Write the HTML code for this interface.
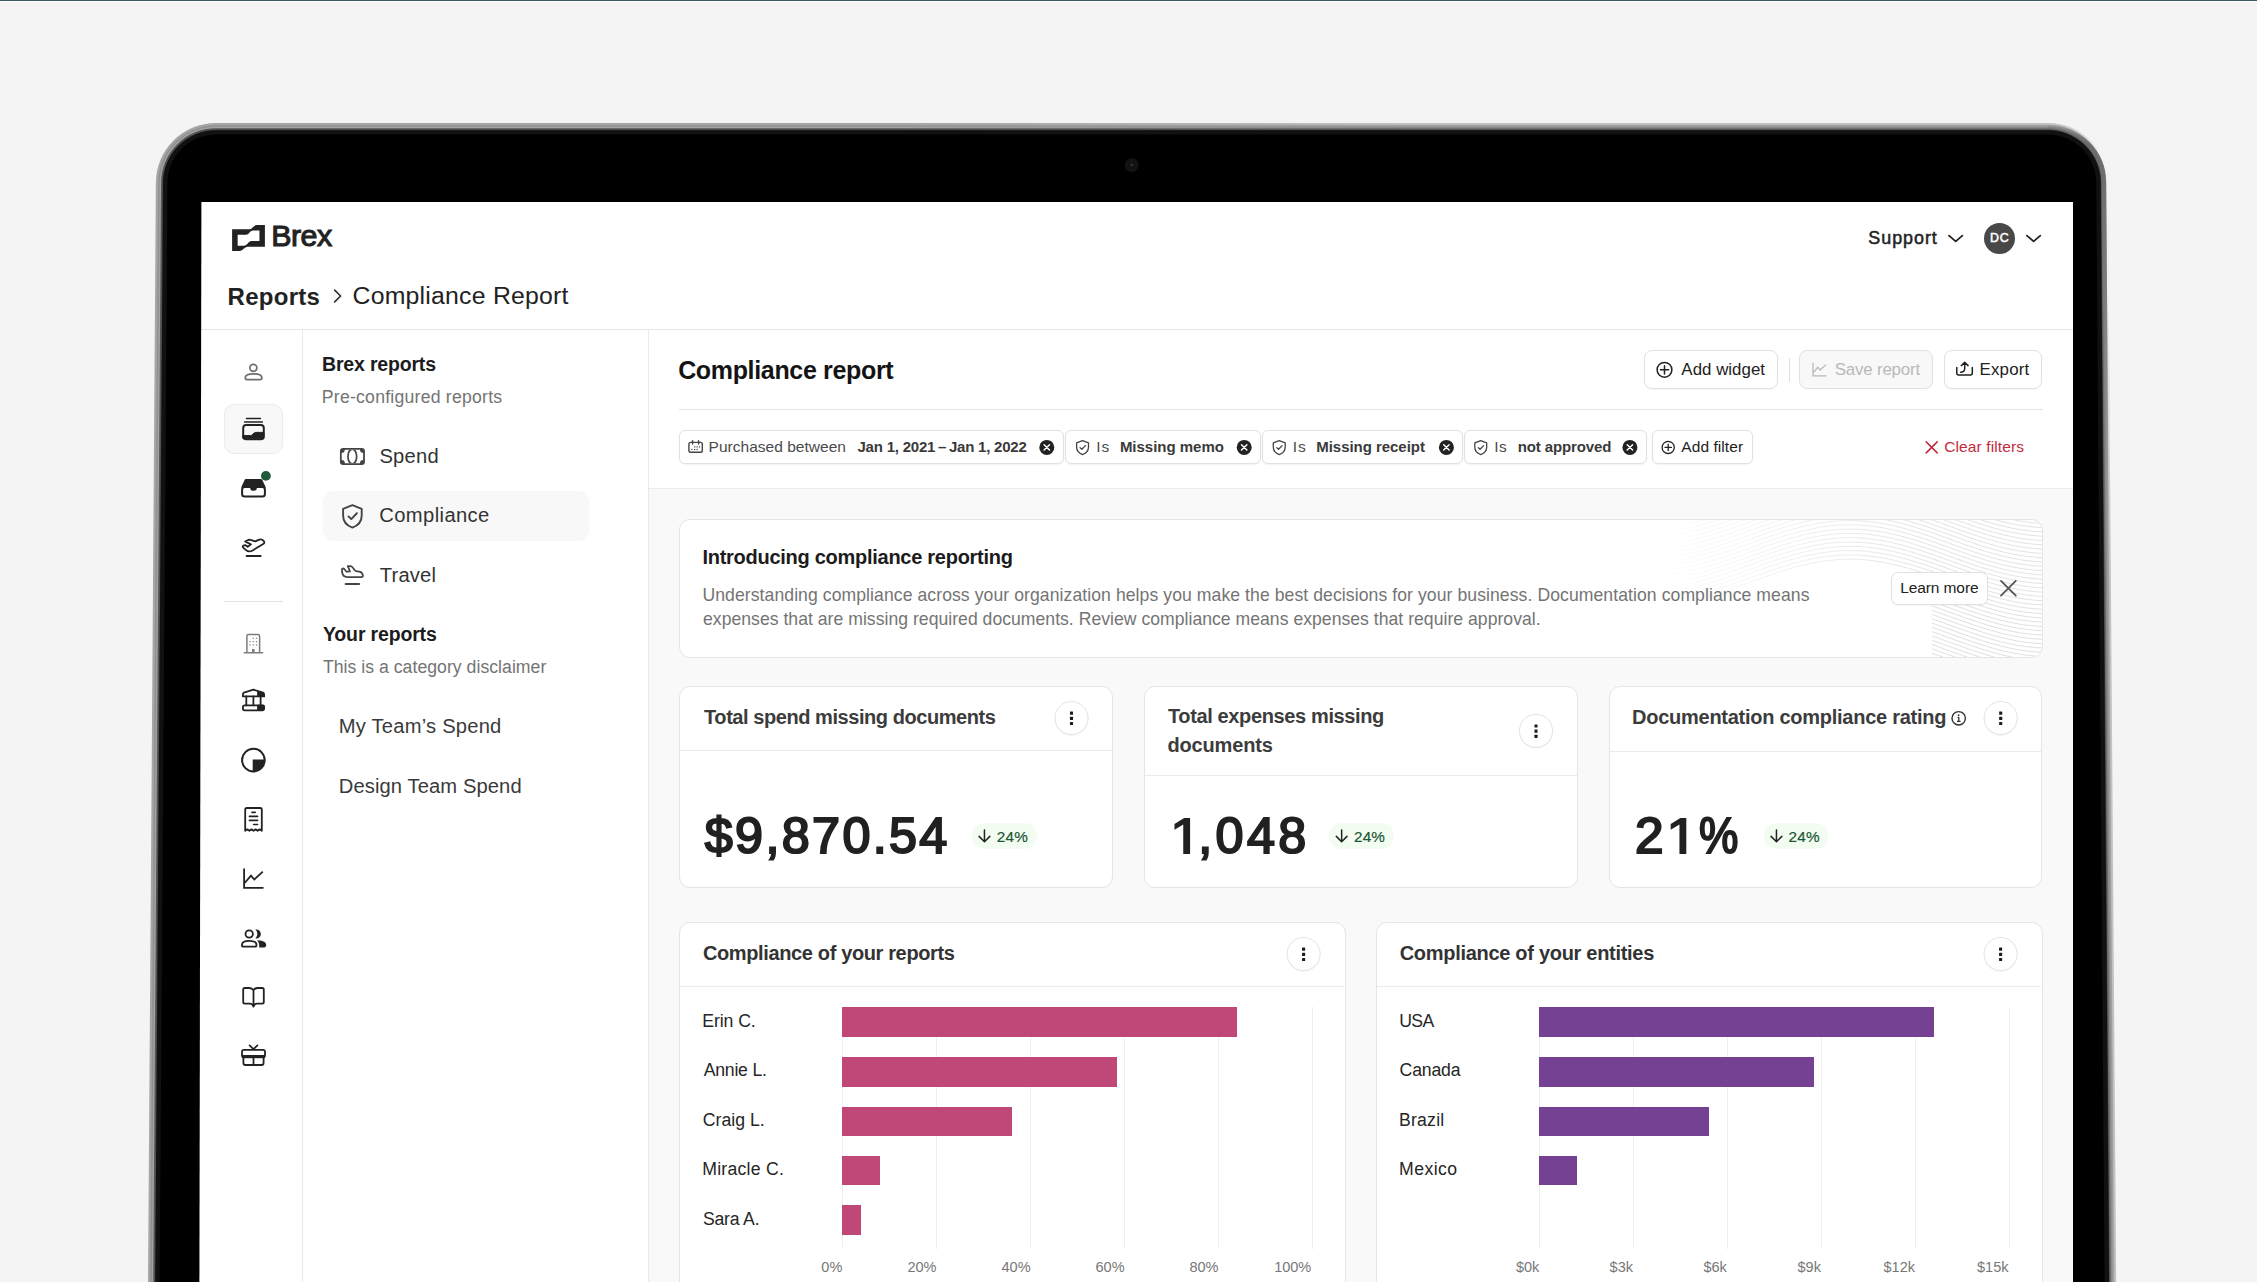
<!DOCTYPE html>
<html><head><meta charset="utf-8"><title>Brex Compliance report</title>
<style>
html,body{margin:0;padding:0}
body{width:2257px;height:1282px;background:#f4f4f4;overflow:hidden;position:relative;font-family:'Liberation Sans',sans-serif}
#topline{position:absolute;left:0;top:0;width:2257px;height:2px;background:linear-gradient(#3d5863,#3d5863 1px,#fbfbfb 1px,#fbfbfb 2px)}
#laptop{position:absolute;left:0;top:0}
#screen{position:absolute;left:199px;top:202px;width:1874px;height:1080px;background:#fff;overflow:hidden}
#pg{position:absolute;left:-199px;top:-202px;width:2257px;height:1282px}
#edge{position:absolute;left:0;top:0;pointer-events:none}
.t{position:absolute;white-space:pre;font-family:'Liberation Sans',sans-serif}
.b{position:absolute;box-sizing:border-box}
.hl{position:absolute;height:1px;background:#e7e7e7}
.vl{position:absolute;width:1px;background:#e9e9e9}
.chip{position:absolute;box-sizing:border-box;border:1px solid #e1e1e1;border-radius:6px;background:#fff;box-shadow:0 1px 1.5px rgba(0,0,0,.05)}
.btn{position:absolute;box-sizing:border-box;border:1px solid #e1e1e1;border-radius:8px;background:#fff;box-shadow:0 1px 1.5px rgba(0,0,0,.04)}
.card{position:absolute;box-sizing:border-box;border:1px solid #e5e5e5;border-radius:11px;background:#fff}
.menu{position:absolute;box-sizing:border-box;width:33.5px;height:33.5px;border:1px solid #e3e3e3;border-radius:50%;background:#fff;box-shadow:0 1px 2px rgba(0,0,0,.05)}
.badge{position:absolute;box-sizing:border-box;height:25.5px;border-radius:13px;background:#f2fcf0}
.bar{position:absolute;height:29.5px}
.pk{background:#c04878}
.pu{background:#754293}
.gl{position:absolute;width:1px;background:#eeeeee;top:1007px;height:242px}
svg{position:absolute;overflow:visible}
</style></head>
<body>
<div id="topline"></div>
<svg id="laptop" width="2257" height="1282" viewBox="0 0 2257 1282">
<defs>
<linearGradient id="bg0" gradientUnits="userSpaceOnUse" x1="900" x2="1400" y1="0" y2="0"><stop offset="0" stop-color="#a6a6a6"/><stop offset="1" stop-color="#c2c2c2"/></linearGradient>
<linearGradient id="bg1" gradientUnits="userSpaceOnUse" x1="900" x2="1400" y1="0" y2="0"><stop offset="0" stop-color="#a0a0a0"/><stop offset="1" stop-color="#aaaaaa"/></linearGradient>
<linearGradient id="bg2" gradientUnits="userSpaceOnUse" x1="900" x2="1400" y1="0" y2="0"><stop offset="0" stop-color="#909090"/><stop offset="1" stop-color="#9c9c9c"/></linearGradient>
<linearGradient id="bg3" gradientUnits="userSpaceOnUse" x1="900" x2="1400" y1="0" y2="0"><stop offset="0" stop-color="#a2a2a2"/><stop offset="1" stop-color="#8a8a8a"/></linearGradient>
<linearGradient id="bg4" gradientUnits="userSpaceOnUse" x1="900" x2="1400" y1="0" y2="0"><stop offset="0" stop-color="#555555"/><stop offset="1" stop-color="#6a6a6a"/></linearGradient>
<linearGradient id="bg5" gradientUnits="userSpaceOnUse" x1="900" x2="1400" y1="0" y2="0"><stop offset="0" stop-color="#444"/><stop offset="1" stop-color="#3a3a3a"/></linearGradient>
<linearGradient id="fade" gradientUnits="userSpaceOnUse" x1="0" x2="0" y1="123" y2="560"><stop offset="0" stop-color="#5c5c5c" stop-opacity="0"/><stop offset="0.05" stop-color="#666" stop-opacity="0.9"/><stop offset="0.35" stop-color="#777" stop-opacity="0.9"/><stop offset="1" stop-color="#888" stop-opacity="0"/></linearGradient>
<linearGradient id="fade0" gradientUnits="userSpaceOnUse" x1="0" x2="0" y1="123" y2="560"><stop offset="0" stop-color="#f4f4f4" stop-opacity="0"/><stop offset="0.07" stop-color="#f4f4f4" stop-opacity="1"/><stop offset="0.35" stop-color="#f4f4f4" stop-opacity="1"/><stop offset="1" stop-color="#f4f4f4" stop-opacity="0"/></linearGradient>
</defs>
<path d="M147.91,1295 L155.85,183 A60.00,60.00 0 0 1 215.85,123.00 L2047.90,123.00 A60.00,60.00 0 0 1 2107.90,183 L2116.30,1295 Z" fill="url(#bg0)"/>
<path d="M149.71,1295 L157.65,183 A58.20,58.20 0 0 1 215.85,124.80 L2047.90,124.80 A58.20,58.20 0 0 1 2106.10,183 L2114.50,1295 Z" fill="url(#bg1)"/>
<path d="M150.31,1295 L158.25,183 A57.60,57.60 0 0 1 215.85,125.40 L2047.90,125.40 A57.60,57.60 0 0 1 2105.50,183 L2113.90,1295 Z" fill="url(#bg2)"/>
<path d="M151.71,1295 L159.65,183 A56.20,56.20 0 0 1 215.85,126.80 L2047.90,126.80 A56.20,56.20 0 0 1 2104.10,183 L2112.50,1295 Z" fill="url(#bg3)"/>
<path d="M153.11,1295 L161.05,183 A54.80,54.80 0 0 1 215.85,128.20 L2047.90,128.20 A54.80,54.80 0 0 1 2102.70,183 L2111.10,1295 Z" fill="url(#bg4)"/>
<path d="M154.51,1295 L162.45,183 A53.40,53.40 0 0 1 215.85,129.60 L2047.90,129.60 A53.40,53.40 0 0 1 2101.30,183 L2109.70,1295 Z" fill="url(#bg5)"/>
<path d="M155.11,1295 L163.05,183 A52.80,52.80 0 0 1 215.85,130.20 L2047.90,130.20 A52.80,52.80 0 0 1 2100.70,183 L2109.10,1295 Z" fill="#111"/>
<path d="M159.51,1295 L167.45,183 A48.40,48.40 0 0 1 215.85,134.60 L2047.90,134.60 A48.40,48.40 0 0 1 2096.30,183 L2104.70,1295 Z" fill="#000"/>
<path d="M2047.90,123.75 A59.25,59.25 0 0 1 2107.15,183 L2115.55,1295" fill="none" stroke="url(#fade0)" stroke-width="1.9"/>
<path d="M2047.90,126.60 A56.40,56.40 0 0 1 2104.30,183 L2112.70,1295" fill="none" stroke="url(#fade)" stroke-width="3.8"/>
<circle cx="1131.7" cy="165" r="7" fill="#121212"/><circle cx="1131.7" cy="165" r="1.2" fill="#274036"/>
</svg>
<div id="screen"><div id="pg">
<div class="b" style="left:649px;top:488px;width:1424px;height:800px;background:#f9f9f9;border-top:1px solid #ececec"></div>
<div class="hl" style="left:201px;top:329px;width:1872px"></div>
<div class="vl" style="left:302px;top:330px;height:960px"></div>
<div class="vl" style="left:648px;top:330px;height:960px"></div>
<div class="b" style="left:223.9px;top:404.1px;width:58.8px;height:49.6px;background:#f8f8f8;border:1px solid #ebebeb;border-radius:10px"></div>
<div class="hl" style="left:224px;top:601px;width:59px;background:#e2e2e2"></div>
<div class="b" style="left:322.8px;top:491.1px;width:266.7px;height:49.8px;background:#f8f8f8;border-radius:11px"></div>
<div class="hl" style="left:679px;top:409px;width:1363.5px;background:#e6e6e6"></div>
<div class="btn" style="left:1644.2px;top:350.2px;width:134.2px;height:38.6px;"></div>
<div class="vl" style="left:1789px;top:357.6px;height:24px;background:#e0e0e0"></div>
<div class="btn" style="left:1799.0px;top:350.2px;width:134.3px;height:38.6px;background:#f8f8f8;box-shadow:none"></div>
<div class="btn" style="left:1944.3px;top:350.2px;width:97.9px;height:38.6px;"></div>
<div class="chip" style="left:679.2px;top:430.3px;width:384.4px;height:34px;"></div>
<div class="chip" style="left:1065.2px;top:430.3px;width:195.6px;height:34px;"></div>
<div class="chip" style="left:1262.3px;top:430.3px;width:201.1px;height:34px;"></div>
<div class="chip" style="left:1464.4px;top:430.3px;width:182.2px;height:34px;"></div>
<div class="chip" style="left:1651.6px;top:430.3px;width:101.2px;height:34px;"></div>
<div class="card" id="banner" style="left:679px;top:518.5px;width:1364px;height:139.5px;overflow:hidden"><!--W0--><svg width="1364" height="140" viewBox="679 518.5 1364 140" style="left:-1px;top:-1px" fill="none">
<defs><linearGradient id="wf" x1="1650" x2="1930" y1="0" y2="0" gradientUnits="userSpaceOnUse"><stop offset="0" stop-color="#fff" stop-opacity="0"/><stop offset="1" stop-color="#fff" stop-opacity="1"/></linearGradient><mask id="wm" maskUnits="userSpaceOnUse" x="1600" y="500" width="460" height="180"><rect x="1600" y="500" width="460" height="180" fill="url(#wf)"/></mask>
<clipPath id="wc2"><rect x="1932" y="500" width="120" height="180"/></clipPath></defs>
<g mask="url(#wm)" stroke="#e3e3e3" stroke-width="1"><path d="M1650,518.7 L1659,518.5 L1668,517.8 L1677,516.7 L1686,515.1 L1695,513.2 L1704,510.9 L1713,508.3 L1722,505.5 L1731,502.5 L1740,499.3 L1749,496.1 L1758,492.8 L1767,489.6 L1776,486.6 L1785,483.7 L1794,481.0 L1803,478.7 L1812,476.7 L1821,475.0 L1830,473.8 L1839,473.0 L1848,472.7 L1857,472.8 L1866,473.4 L1875,474.5 L1884,475.9 L1893,477.8 L1902,480.0 L1911,482.5 L1920,485.3 L1929,488.2 L1938,491.4 L1947,494.6 L1956,497.9 L1965,501.1 L1974,504.2 L1983,507.1 L1992,509.8 L2001,512.2 L2010,514.3 L2019,516.0 L2028,517.3 L2037,518.2 L2046,518.7 M1650,523.0 L1659,522.8 L1668,522.1 L1677,521.0 L1686,519.4 L1695,517.5 L1704,515.2 L1713,512.6 L1722,509.8 L1731,506.8 L1740,503.6 L1749,500.4 L1758,497.1 L1767,493.9 L1776,490.9 L1785,488.0 L1794,485.3 L1803,483.0 L1812,481.0 L1821,479.3 L1830,478.1 L1839,477.3 L1848,477.0 L1857,477.1 L1866,477.7 L1875,478.8 L1884,480.2 L1893,482.1 L1902,484.3 L1911,486.8 L1920,489.6 L1929,492.5 L1938,495.7 L1947,498.9 L1956,502.2 L1965,505.4 L1974,508.5 L1983,511.4 L1992,514.1 L2001,516.5 L2010,518.6 L2019,520.3 L2028,521.6 L2037,522.5 L2046,523.0 M1650,527.3 L1659,527.1 L1668,526.4 L1677,525.3 L1686,523.7 L1695,521.8 L1704,519.5 L1713,516.9 L1722,514.1 L1731,511.1 L1740,507.9 L1749,504.7 L1758,501.4 L1767,498.2 L1776,495.2 L1785,492.3 L1794,489.6 L1803,487.3 L1812,485.3 L1821,483.6 L1830,482.4 L1839,481.6 L1848,481.3 L1857,481.4 L1866,482.0 L1875,483.1 L1884,484.5 L1893,486.4 L1902,488.6 L1911,491.1 L1920,493.9 L1929,496.8 L1938,500.0 L1947,503.2 L1956,506.5 L1965,509.7 L1974,512.8 L1983,515.7 L1992,518.4 L2001,520.8 L2010,522.9 L2019,524.6 L2028,525.9 L2037,526.8 L2046,527.3 M1650,531.6 L1659,531.4 L1668,530.7 L1677,529.6 L1686,528.0 L1695,526.1 L1704,523.8 L1713,521.2 L1722,518.4 L1731,515.4 L1740,512.2 L1749,509.0 L1758,505.7 L1767,502.5 L1776,499.5 L1785,496.6 L1794,493.9 L1803,491.6 L1812,489.6 L1821,487.9 L1830,486.7 L1839,485.9 L1848,485.6 L1857,485.7 L1866,486.3 L1875,487.4 L1884,488.8 L1893,490.7 L1902,492.9 L1911,495.4 L1920,498.2 L1929,501.1 L1938,504.3 L1947,507.5 L1956,510.8 L1965,514.0 L1974,517.1 L1983,520.0 L1992,522.7 L2001,525.1 L2010,527.2 L2019,528.9 L2028,530.2 L2037,531.1 L2046,531.6 M1650,535.9 L1659,535.7 L1668,535.0 L1677,533.9 L1686,532.3 L1695,530.4 L1704,528.1 L1713,525.5 L1722,522.7 L1731,519.7 L1740,516.5 L1749,513.3 L1758,510.0 L1767,506.8 L1776,503.8 L1785,500.9 L1794,498.2 L1803,495.9 L1812,493.9 L1821,492.2 L1830,491.0 L1839,490.2 L1848,489.9 L1857,490.0 L1866,490.6 L1875,491.7 L1884,493.1 L1893,495.0 L1902,497.2 L1911,499.7 L1920,502.5 L1929,505.4 L1938,508.6 L1947,511.8 L1956,515.1 L1965,518.3 L1974,521.4 L1983,524.3 L1992,527.0 L2001,529.4 L2010,531.5 L2019,533.2 L2028,534.5 L2037,535.4 L2046,535.9 M1650,540.2 L1659,540.0 L1668,539.3 L1677,538.2 L1686,536.6 L1695,534.7 L1704,532.4 L1713,529.8 L1722,527.0 L1731,524.0 L1740,520.8 L1749,517.6 L1758,514.3 L1767,511.1 L1776,508.1 L1785,505.2 L1794,502.5 L1803,500.2 L1812,498.2 L1821,496.5 L1830,495.3 L1839,494.5 L1848,494.2 L1857,494.3 L1866,494.9 L1875,496.0 L1884,497.4 L1893,499.3 L1902,501.5 L1911,504.0 L1920,506.8 L1929,509.7 L1938,512.9 L1947,516.1 L1956,519.4 L1965,522.6 L1974,525.7 L1983,528.6 L1992,531.3 L2001,533.7 L2010,535.8 L2019,537.5 L2028,538.8 L2037,539.7 L2046,540.2 M1650,544.5 L1659,544.3 L1668,543.6 L1677,542.5 L1686,540.9 L1695,539.0 L1704,536.7 L1713,534.1 L1722,531.3 L1731,528.3 L1740,525.1 L1749,521.9 L1758,518.6 L1767,515.4 L1776,512.4 L1785,509.5 L1794,506.8 L1803,504.5 L1812,502.5 L1821,500.8 L1830,499.6 L1839,498.8 L1848,498.5 L1857,498.6 L1866,499.2 L1875,500.3 L1884,501.7 L1893,503.6 L1902,505.8 L1911,508.3 L1920,511.1 L1929,514.0 L1938,517.2 L1947,520.4 L1956,523.7 L1965,526.9 L1974,530.0 L1983,532.9 L1992,535.6 L2001,538.0 L2010,540.1 L2019,541.8 L2028,543.1 L2037,544.0 L2046,544.5 M1650,548.8 L1659,548.6 L1668,547.9 L1677,546.8 L1686,545.2 L1695,543.3 L1704,541.0 L1713,538.4 L1722,535.6 L1731,532.6 L1740,529.4 L1749,526.2 L1758,522.9 L1767,519.7 L1776,516.7 L1785,513.8 L1794,511.1 L1803,508.8 L1812,506.8 L1821,505.1 L1830,503.9 L1839,503.1 L1848,502.8 L1857,502.9 L1866,503.5 L1875,504.6 L1884,506.0 L1893,507.9 L1902,510.1 L1911,512.6 L1920,515.4 L1929,518.3 L1938,521.5 L1947,524.7 L1956,528.0 L1965,531.2 L1974,534.3 L1983,537.2 L1992,539.9 L2001,542.3 L2010,544.4 L2019,546.1 L2028,547.4 L2037,548.3 L2046,548.8 M1650,553.1 L1659,552.9 L1668,552.2 L1677,551.1 L1686,549.5 L1695,547.6 L1704,545.3 L1713,542.7 L1722,539.9 L1731,536.9 L1740,533.7 L1749,530.5 L1758,527.2 L1767,524.0 L1776,521.0 L1785,518.1 L1794,515.4 L1803,513.1 L1812,511.1 L1821,509.4 L1830,508.2 L1839,507.4 L1848,507.1 L1857,507.2 L1866,507.8 L1875,508.9 L1884,510.3 L1893,512.2 L1902,514.4 L1911,516.9 L1920,519.7 L1929,522.6 L1938,525.8 L1947,529.0 L1956,532.3 L1965,535.5 L1974,538.6 L1983,541.5 L1992,544.2 L2001,546.6 L2010,548.7 L2019,550.4 L2028,551.7 L2037,552.6 L2046,553.1 M1650,557.4 L1659,557.2 L1668,556.5 L1677,555.4 L1686,553.8 L1695,551.9 L1704,549.6 L1713,547.0 L1722,544.2 L1731,541.2 L1740,538.0 L1749,534.8 L1758,531.5 L1767,528.3 L1776,525.3 L1785,522.4 L1794,519.7 L1803,517.4 L1812,515.4 L1821,513.7 L1830,512.5 L1839,511.7 L1848,511.4 L1857,511.5 L1866,512.1 L1875,513.2 L1884,514.6 L1893,516.5 L1902,518.7 L1911,521.2 L1920,524.0 L1929,526.9 L1938,530.1 L1947,533.3 L1956,536.6 L1965,539.8 L1974,542.9 L1983,545.8 L1992,548.5 L2001,550.9 L2010,553.0 L2019,554.7 L2028,556.0 L2037,556.9 L2046,557.4 M1650,561.7 L1659,561.5 L1668,560.8 L1677,559.7 L1686,558.1 L1695,556.2 L1704,553.9 L1713,551.3 L1722,548.5 L1731,545.5 L1740,542.3 L1749,539.1 L1758,535.8 L1767,532.6 L1776,529.6 L1785,526.7 L1794,524.0 L1803,521.7 L1812,519.7 L1821,518.0 L1830,516.8 L1839,516.0 L1848,515.7 L1857,515.8 L1866,516.4 L1875,517.5 L1884,518.9 L1893,520.8 L1902,523.0 L1911,525.5 L1920,528.3 L1929,531.2 L1938,534.4 L1947,537.6 L1956,540.9 L1965,544.1 L1974,547.2 L1983,550.1 L1992,552.8 L2001,555.2 L2010,557.3 L2019,559.0 L2028,560.3 L2037,561.2 L2046,561.7 M1650,566.0 L1659,565.8 L1668,565.1 L1677,564.0 L1686,562.4 L1695,560.5 L1704,558.2 L1713,555.6 L1722,552.8 L1731,549.8 L1740,546.6 L1749,543.4 L1758,540.1 L1767,536.9 L1776,533.9 L1785,531.0 L1794,528.3 L1803,526.0 L1812,524.0 L1821,522.3 L1830,521.1 L1839,520.3 L1848,520.0 L1857,520.1 L1866,520.7 L1875,521.8 L1884,523.2 L1893,525.1 L1902,527.3 L1911,529.8 L1920,532.6 L1929,535.5 L1938,538.7 L1947,541.9 L1956,545.2 L1965,548.4 L1974,551.5 L1983,554.4 L1992,557.1 L2001,559.5 L2010,561.6 L2019,563.3 L2028,564.6 L2037,565.5 L2046,566.0 M1650,570.3 L1659,570.1 L1668,569.4 L1677,568.3 L1686,566.7 L1695,564.8 L1704,562.5 L1713,559.9 L1722,557.1 L1731,554.1 L1740,550.9 L1749,547.7 L1758,544.4 L1767,541.2 L1776,538.2 L1785,535.3 L1794,532.6 L1803,530.3 L1812,528.3 L1821,526.6 L1830,525.4 L1839,524.6 L1848,524.3 L1857,524.4 L1866,525.0 L1875,526.1 L1884,527.5 L1893,529.4 L1902,531.6 L1911,534.1 L1920,536.9 L1929,539.8 L1938,543.0 L1947,546.2 L1956,549.5 L1965,552.7 L1974,555.8 L1983,558.7 L1992,561.4 L2001,563.8 L2010,565.9 L2019,567.6 L2028,568.9 L2037,569.8 L2046,570.3 M1650,574.6 L1659,574.4 L1668,573.7 L1677,572.6 L1686,571.0 L1695,569.1 L1704,566.8 L1713,564.2 L1722,561.4 L1731,558.4 L1740,555.2 L1749,552.0 L1758,548.7 L1767,545.5 L1776,542.5 L1785,539.6 L1794,536.9 L1803,534.6 L1812,532.6 L1821,530.9 L1830,529.7 L1839,528.9 L1848,528.6 L1857,528.7 L1866,529.3 L1875,530.4 L1884,531.8 L1893,533.7 L1902,535.9 L1911,538.4 L1920,541.2 L1929,544.1 L1938,547.3 L1947,550.5 L1956,553.8 L1965,557.0 L1974,560.1 L1983,563.0 L1992,565.7 L2001,568.1 L2010,570.2 L2019,571.9 L2028,573.2 L2037,574.1 L2046,574.6 M1650,578.9 L1659,578.7 L1668,578.0 L1677,576.9 L1686,575.3 L1695,573.4 L1704,571.1 L1713,568.5 L1722,565.7 L1731,562.7 L1740,559.5 L1749,556.3 L1758,553.0 L1767,549.8 L1776,546.8 L1785,543.9 L1794,541.2 L1803,538.9 L1812,536.9 L1821,535.2 L1830,534.0 L1839,533.2 L1848,532.9 L1857,533.0 L1866,533.6 L1875,534.7 L1884,536.1 L1893,538.0 L1902,540.2 L1911,542.7 L1920,545.5 L1929,548.4 L1938,551.6 L1947,554.8 L1956,558.1 L1965,561.3 L1974,564.4 L1983,567.3 L1992,570.0 L2001,572.4 L2010,574.5 L2019,576.2 L2028,577.5 L2037,578.4 L2046,578.9 M1650,583.2 L1659,583.0 L1668,582.3 L1677,581.2 L1686,579.6 L1695,577.7 L1704,575.4 L1713,572.8 L1722,570.0 L1731,567.0 L1740,563.8 L1749,560.6 L1758,557.3 L1767,554.1 L1776,551.1 L1785,548.2 L1794,545.5 L1803,543.2 L1812,541.2 L1821,539.5 L1830,538.3 L1839,537.5 L1848,537.2 L1857,537.3 L1866,537.9 L1875,539.0 L1884,540.4 L1893,542.3 L1902,544.5 L1911,547.0 L1920,549.8 L1929,552.7 L1938,555.9 L1947,559.1 L1956,562.4 L1965,565.6 L1974,568.7 L1983,571.6 L1992,574.3 L2001,576.7 L2010,578.8 L2019,580.5 L2028,581.8 L2037,582.7 L2046,583.2 M1650,587.5 L1659,587.3 L1668,586.6 L1677,585.5 L1686,583.9 L1695,582.0 L1704,579.7 L1713,577.1 L1722,574.3 L1731,571.3 L1740,568.1 L1749,564.9 L1758,561.6 L1767,558.4 L1776,555.4 L1785,552.5 L1794,549.8 L1803,547.5 L1812,545.5 L1821,543.8 L1830,542.6 L1839,541.8 L1848,541.5 L1857,541.6 L1866,542.2 L1875,543.3 L1884,544.7 L1893,546.6 L1902,548.8 L1911,551.3 L1920,554.1 L1929,557.0 L1938,560.2 L1947,563.4 L1956,566.7 L1965,569.9 L1974,573.0 L1983,575.9 L1992,578.6 L2001,581.0 L2010,583.1 L2019,584.8 L2028,586.1 L2037,587.0 L2046,587.5 M1650,591.8 L1659,591.6 L1668,590.9 L1677,589.8 L1686,588.2 L1695,586.3 L1704,584.0 L1713,581.4 L1722,578.6 L1731,575.6 L1740,572.4 L1749,569.2 L1758,565.9 L1767,562.7 L1776,559.7 L1785,556.8 L1794,554.1 L1803,551.8 L1812,549.8 L1821,548.1 L1830,546.9 L1839,546.1 L1848,545.8 L1857,545.9 L1866,546.5 L1875,547.6 L1884,549.0 L1893,550.9 L1902,553.1 L1911,555.6 L1920,558.4 L1929,561.3 L1938,564.5 L1947,567.7 L1956,571.0 L1965,574.2 L1974,577.3 L1983,580.2 L1992,582.9 L2001,585.3 L2010,587.4 L2019,589.1 L2028,590.4 L2037,591.3 L2046,591.8 M1650,596.1 L1659,595.9 L1668,595.2 L1677,594.1 L1686,592.5 L1695,590.6 L1704,588.3 L1713,585.7 L1722,582.9 L1731,579.9 L1740,576.7 L1749,573.5 L1758,570.2 L1767,567.0 L1776,564.0 L1785,561.1 L1794,558.4 L1803,556.1 L1812,554.1 L1821,552.4 L1830,551.2 L1839,550.4 L1848,550.1 L1857,550.2 L1866,550.8 L1875,551.9 L1884,553.3 L1893,555.2 L1902,557.4 L1911,559.9 L1920,562.7 L1929,565.6 L1938,568.8 L1947,572.0 L1956,575.3 L1965,578.5 L1974,581.6 L1983,584.5 L1992,587.2 L2001,589.6 L2010,591.7 L2019,593.4 L2028,594.7 L2037,595.6 L2046,596.1 M1650,600.4 L1659,600.2 L1668,599.5 L1677,598.4 L1686,596.8 L1695,594.9 L1704,592.6 L1713,590.0 L1722,587.2 L1731,584.2 L1740,581.0 L1749,577.8 L1758,574.5 L1767,571.3 L1776,568.3 L1785,565.4 L1794,562.7 L1803,560.4 L1812,558.4 L1821,556.7 L1830,555.5 L1839,554.7 L1848,554.4 L1857,554.5 L1866,555.1 L1875,556.2 L1884,557.6 L1893,559.5 L1902,561.7 L1911,564.2 L1920,567.0 L1929,569.9 L1938,573.1 L1947,576.3 L1956,579.6 L1965,582.8 L1974,585.9 L1983,588.8 L1992,591.5 L2001,593.9 L2010,596.0 L2019,597.7 L2028,599.0 L2037,599.9 L2046,600.4 M1650,604.7 L1659,604.5 L1668,603.8 L1677,602.7 L1686,601.1 L1695,599.2 L1704,596.9 L1713,594.3 L1722,591.5 L1731,588.5 L1740,585.3 L1749,582.1 L1758,578.8 L1767,575.6 L1776,572.6 L1785,569.7 L1794,567.0 L1803,564.7 L1812,562.7 L1821,561.0 L1830,559.8 L1839,559.0 L1848,558.7 L1857,558.8 L1866,559.4 L1875,560.5 L1884,561.9 L1893,563.8 L1902,566.0 L1911,568.5 L1920,571.3 L1929,574.2 L1938,577.4 L1947,580.6 L1956,583.9 L1965,587.1 L1974,590.2 L1983,593.1 L1992,595.8 L2001,598.2 L2010,600.3 L2019,602.0 L2028,603.3 L2037,604.2 L2046,604.7"/></g>
<g clip-path="url(#wc2)" stroke="#e0e0e0" stroke-width="1"><path d="M1928,578.2 L1937,581.3 L1946,584.6 L1955,587.8 L1964,591.0 L1973,594.1 L1982,597.1 L1991,599.8 L2000,602.3 L2009,604.4 L2018,606.2 L2027,607.5 L2036,608.4 L2045,608.9 M1928,582.5 L1937,585.6 L1946,588.9 L1955,592.1 L1964,595.3 L1973,598.4 L1982,601.4 L1991,604.1 L2000,606.6 L2009,608.7 L2018,610.5 L2027,611.8 L2036,612.7 L2045,613.2 M1928,586.8 L1937,589.9 L1946,593.2 L1955,596.4 L1964,599.6 L1973,602.7 L1982,605.7 L1991,608.4 L2000,610.9 L2009,613.0 L2018,614.8 L2027,616.1 L2036,617.0 L2045,617.5 M1928,591.1 L1937,594.2 L1946,597.5 L1955,600.7 L1964,603.9 L1973,607.0 L1982,610.0 L1991,612.7 L2000,615.2 L2009,617.3 L2018,619.1 L2027,620.4 L2036,621.3 L2045,621.8 M1928,595.4 L1937,598.5 L1946,601.8 L1955,605.0 L1964,608.2 L1973,611.3 L1982,614.3 L1991,617.0 L2000,619.5 L2009,621.6 L2018,623.4 L2027,624.7 L2036,625.6 L2045,626.1 M1928,599.7 L1937,602.8 L1946,606.1 L1955,609.3 L1964,612.5 L1973,615.6 L1982,618.6 L1991,621.3 L2000,623.8 L2009,625.9 L2018,627.7 L2027,629.0 L2036,629.9 L2045,630.4 M1928,604.0 L1937,607.1 L1946,610.4 L1955,613.6 L1964,616.8 L1973,619.9 L1982,622.9 L1991,625.6 L2000,628.1 L2009,630.2 L2018,632.0 L2027,633.3 L2036,634.2 L2045,634.7 M1928,608.3 L1937,611.4 L1946,614.7 L1955,617.9 L1964,621.1 L1973,624.2 L1982,627.2 L1991,629.9 L2000,632.4 L2009,634.5 L2018,636.3 L2027,637.6 L2036,638.5 L2045,639.0 M1928,612.6 L1937,615.7 L1946,619.0 L1955,622.2 L1964,625.4 L1973,628.5 L1982,631.5 L1991,634.2 L2000,636.7 L2009,638.8 L2018,640.6 L2027,641.9 L2036,642.8 L2045,643.3 M1928,616.9 L1937,620.0 L1946,623.3 L1955,626.5 L1964,629.7 L1973,632.8 L1982,635.8 L1991,638.5 L2000,641.0 L2009,643.1 L2018,644.9 L2027,646.2 L2036,647.1 L2045,647.6 M1928,621.2 L1937,624.3 L1946,627.6 L1955,630.8 L1964,634.0 L1973,637.1 L1982,640.1 L1991,642.8 L2000,645.3 L2009,647.4 L2018,649.2 L2027,650.5 L2036,651.4 L2045,651.9 M1928,625.5 L1937,628.6 L1946,631.9 L1955,635.1 L1964,638.3 L1973,641.4 L1982,644.4 L1991,647.1 L2000,649.6 L2009,651.7 L2018,653.5 L2027,654.8 L2036,655.7 L2045,656.2 M1928,629.8 L1937,632.9 L1946,636.2 L1955,639.4 L1964,642.6 L1973,645.7 L1982,648.7 L1991,651.4 L2000,653.9 L2009,656.0 L2018,657.8 L2027,659.1 L2036,660.0 L2045,660.5 M1928,634.1 L1937,637.2 L1946,640.5 L1955,643.7 L1964,646.9 L1973,650.0 L1982,653.0 L1991,655.7 L2000,658.2 L2009,660.3 L2018,662.1 L2027,663.4 L2036,664.3 L2045,664.8 M1928,638.4 L1937,641.5 L1946,644.8 L1955,648.0 L1964,651.2 L1973,654.3 L1982,657.3 L1991,660.0 L2000,662.5 L2009,664.6 L2018,666.4 L2027,667.7 L2036,668.6 L2045,669.1 M1928,642.7 L1937,645.8 L1946,649.1 L1955,652.3 L1964,655.5 L1973,658.6 L1982,661.6 L1991,664.3 L2000,666.8 L2009,668.9 L2018,670.7 L2027,672.0 L2036,672.9 L2045,673.4 M1928,647.0 L1937,650.1 L1946,653.4 L1955,656.6 L1964,659.8 L1973,662.9 L1982,665.9 L1991,668.6 L2000,671.1 L2009,673.2 L2018,675.0 L2027,676.3 L2036,677.2 L2045,677.7 M1928,651.3 L1937,654.4 L1946,657.7 L1955,660.9 L1964,664.1 L1973,667.2 L1982,670.2 L1991,672.9 L2000,675.4 L2009,677.5 L2018,679.3 L2027,680.6 L2036,681.5 L2045,682.0 M1928,655.6 L1937,658.7 L1946,662.0 L1955,665.2 L1964,668.4 L1973,671.5 L1982,674.5 L1991,677.2 L2000,679.7 L2009,681.8 L2018,683.6 L2027,684.9 L2036,685.8 L2045,686.3"/></g>
</svg><!--W1--></div>
<div class="btn" style="left:1891.4px;top:571.7px;width:96.3px;height:32.9px;border-radius:7px"></div>
<div class="card" style="left:679.0px;top:686.4px;width:434.1px;height:201.8px;"></div>
<div class="hl" style="left:680px;top:750.2px;width:432.1px;background:#ebebeb"></div>
<div class="card" style="left:1143.6px;top:686.4px;width:434.0px;height:201.8px;"></div>
<div class="hl" style="left:1144.6px;top:775.4px;width:432.0px;background:#ebebeb"></div>
<div class="card" style="left:1608.6px;top:686.4px;width:433.6px;height:201.8px;"></div>
<div class="hl" style="left:1609.6px;top:750.8px;width:431.6px;background:#ebebeb"></div>
<div class="card" style="left:679.0px;top:922.3px;width:666.6px;height:377.7px;"></div>
<div class="hl" style="left:680px;top:986.3px;width:664.2px;background:#ebebeb"></div>
<div class="card" style="left:1376.0px;top:922.3px;width:666.6px;height:377.7px;"></div>
<div class="hl" style="left:1377px;top:986.3px;width:664.2px;background:#ebebeb"></div>
<div class="badge" style="left:971.5px;top:823.3px;width:65.5px;height:25.5px;"></div>
<div class="badge" style="left:1328.9px;top:823.3px;width:65.5px;height:25.5px;"></div>
<div class="badge" style="left:1763.7px;top:823.3px;width:64.5px;height:25.5px;"></div>
<div class="gl" style="left:841.5px"></div>
<div class="gl" style="left:935.5px"></div>
<div class="gl" style="left:1029.5px"></div>
<div class="gl" style="left:1123.5px"></div>
<div class="gl" style="left:1217.5px"></div>
<div class="gl" style="left:1311.5px"></div>
<div class="gl" style="left:1538.5px"></div>
<div class="gl" style="left:1632.5px"></div>
<div class="gl" style="left:1726.5px"></div>
<div class="gl" style="left:1820.5px"></div>
<div class="gl" style="left:1914.5px"></div>
<div class="gl" style="left:2008.5px"></div>
<div class="bar pk" style="left:841.8px;top:1007.3px;width:394.9px"></div>
<div class="bar pk" style="left:841.8px;top:1057px;width:275.0px"></div>
<div class="bar pk" style="left:841.8px;top:1106.5px;width:170.0px"></div>
<div class="bar pk" style="left:841.8px;top:1155.7px;width:38.0px"></div>
<div class="bar pk" style="left:841.8px;top:1205px;width:19.2px"></div>
<div class="bar pu" style="left:1538.6px;top:1007.3px;width:395.6px"></div>
<div class="bar pu" style="left:1538.6px;top:1057px;width:275.6px"></div>
<div class="bar pu" style="left:1538.6px;top:1106.5px;width:170.4px"></div>
<div class="bar pu" style="left:1538.6px;top:1155.7px;width:38.3px"></div>
<div class="b" id="avatar" style="left:1984.1px;top:223px;width:31px;height:31px;border-radius:50%;background:#484848"></div>
<svg id="menus" width="2257" height="1282" viewBox="0 0 2257 1282" style="left:0;top:0"><circle cx="1071.5" cy="719.0" r="17" fill="#000" opacity="0.035"/><circle cx="1071.5" cy="718.0" r="16.55" fill="#fff" stroke="#e3e3e3" stroke-width="1"/><circle cx="1536.0" cy="731.8" r="17" fill="#000" opacity="0.035"/><circle cx="1536.0" cy="730.8" r="16.55" fill="#fff" stroke="#e3e3e3" stroke-width="1"/><circle cx="2000.7" cy="719.0" r="17" fill="#000" opacity="0.035"/><circle cx="2000.7" cy="718.0" r="16.55" fill="#fff" stroke="#e3e3e3" stroke-width="1"/><circle cx="1303.6" cy="955.0" r="17" fill="#000" opacity="0.035"/><circle cx="1303.6" cy="954.0" r="16.55" fill="#fff" stroke="#e3e3e3" stroke-width="1"/><circle cx="2000.6" cy="955.0" r="17" fill="#000" opacity="0.035"/><circle cx="2000.6" cy="954.0" r="16.55" fill="#fff" stroke="#e3e3e3" stroke-width="1"/></svg>

<div class="t" style="left:271.16px;top:217.37px;font-size:30.4px;line-height:36px;font-weight:400;color:#222;letter-spacing:-0.489px;-webkit-text-stroke:1.1px #222;">Brex</div>
<div class="t" style="left:227.59px;top:281.78px;font-size:24px;line-height:29px;font-weight:700;color:#222;letter-spacing:0.285px;">Reports</div>
<div class="t" style="left:352.54px;top:280.99px;font-size:24.84px;line-height:30px;font-weight:400;color:#222;letter-spacing:0.214px;">Compliance Report</div>
<div class="t" style="left:1868.34px;top:227.50px;font-size:17.9px;line-height:21px;font-weight:400;color:#222;letter-spacing:0.964px;-webkit-text-stroke:0.5px #222;">Support</div>
<div class="t" style="left:1989.93px;top:231.10px;font-size:12.4px;line-height:15px;font-weight:400;color:#fff;letter-spacing:0.793px;-webkit-text-stroke:0.5px #fff;">DC</div>
<div class="t" style="left:322.00px;top:353.14px;font-size:19.5px;line-height:23px;font-weight:700;color:#1c1c1c;letter-spacing:-0.178px;">Brex reports</div>
<div class="t" style="left:321.85px;top:386.88px;font-size:17.65px;line-height:21px;font-weight:400;color:#747474;letter-spacing:0.227px;">Pre-configured reports</div>
<div class="t" style="left:379.38px;top:443.81px;font-size:20.18px;line-height:24px;font-weight:400;color:#333;letter-spacing:0.272px;">Spend</div>
<div class="t" style="left:379.28px;top:503.31px;font-size:20.18px;line-height:24px;font-weight:400;color:#333;letter-spacing:0.390px;">Compliance</div>
<div class="t" style="left:379.85px;top:562.61px;font-size:20.18px;line-height:24px;font-weight:400;color:#333;letter-spacing:0.162px;">Travel</div>
<div class="t" style="left:322.97px;top:622.74px;font-size:19.5px;line-height:23px;font-weight:700;color:#1c1c1c;letter-spacing:-0.158px;">Your reports</div>
<div class="t" style="left:322.90px;top:657.48px;font-size:17.65px;line-height:21px;font-weight:400;color:#747474;letter-spacing:0.030px;">This is a category disclaimer</div>
<div class="t" style="left:338.84px;top:713.71px;font-size:20.18px;line-height:24px;font-weight:400;color:#3a3a3a;letter-spacing:0.207px;">My Team’s Spend</div>
<div class="t" style="left:338.84px;top:774.11px;font-size:20.18px;line-height:24px;font-weight:400;color:#3a3a3a;letter-spacing:0.094px;">Design Team Spend</div>
<div class="t" style="left:678.17px;top:355.24px;font-size:25px;line-height:30px;font-weight:700;color:#141414;letter-spacing:-0.340px;">Compliance report</div>
<div class="t" style="left:1681.37px;top:359.85px;font-size:16.87px;line-height:20px;font-weight:400;color:#222;letter-spacing:0.027px;">Add widget</div>
<div class="t" style="left:1834.73px;top:359.85px;font-size:16.87px;line-height:20px;font-weight:400;color:#b9b9b9;letter-spacing:-0.176px;">Save report</div>
<div class="t" style="left:1979.62px;top:359.85px;font-size:16.87px;line-height:20px;font-weight:400;color:#222;letter-spacing:0.156px;">Export</div>
<div class="t" style="left:708.53px;top:436.92px;font-size:15.52px;line-height:19px;font-weight:400;color:#4a4a4a;letter-spacing:0.021px;">Purchased between</div>
<div class="t" style="left:857.47px;top:437.60px;font-size:15px;line-height:18px;font-weight:700;color:#3a3a3a;letter-spacing:-0.214px;">Jan 1, 2021 – Jan 1, 2022</div>
<div class="t" style="left:1096.17px;top:436.92px;font-size:15.52px;line-height:19px;font-weight:400;color:#4a4a4a;letter-spacing:0.924px;">Is</div>
<div class="t" style="left:1119.90px;top:437.60px;font-size:15px;line-height:18px;font-weight:700;color:#3a3a3a;letter-spacing:-0.018px;">Missing memo</div>
<div class="t" style="left:1292.67px;top:436.92px;font-size:15.52px;line-height:19px;font-weight:400;color:#4a4a4a;letter-spacing:1.024px;">Is</div>
<div class="t" style="left:1316.30px;top:437.60px;font-size:15px;line-height:18px;font-weight:700;color:#3a3a3a;letter-spacing:-0.044px;">Missing receipt</div>
<div class="t" style="left:1494.27px;top:436.92px;font-size:15.52px;line-height:19px;font-weight:400;color:#4a4a4a;letter-spacing:0.524px;">Is</div>
<div class="t" style="left:1517.81px;top:437.60px;font-size:15px;line-height:18px;font-weight:700;color:#3a3a3a;letter-spacing:-0.130px;">not approved</div>
<div class="t" style="left:1681.37px;top:436.92px;font-size:15.52px;line-height:19px;font-weight:400;color:#222;letter-spacing:0.051px;">Add filter</div>
<div class="t" style="left:1944.21px;top:436.92px;font-size:15.52px;line-height:19px;font-weight:400;color:#c22a3d;letter-spacing:0.108px;">Clear filters</div>
<div class="t" style="left:702.46px;top:544.87px;font-size:20px;line-height:24px;font-weight:700;color:#1c1c1c;letter-spacing:-0.272px;">Introducing compliance reporting</div>
<div class="t" style="left:702.44px;top:584.71px;font-size:17.59px;line-height:21px;font-weight:400;color:#747474;letter-spacing:0.081px;">Understanding compliance across your organization helps you make the best decisions for your business. Documentation compliance means</div>
<div class="t" style="left:703.05px;top:608.71px;font-size:17.59px;line-height:21px;font-weight:400;color:#747474;letter-spacing:0.031px;">expenses that are missing required documents. Review compliance means expenses that require approval.</div>
<div class="t" style="left:1900.13px;top:578.03px;font-size:15.5px;line-height:19px;font-weight:400;color:#222;letter-spacing:-0.089px;">Learn more</div>
<div class="t" style="left:704.08px;top:705.17px;font-size:20px;line-height:24px;font-weight:700;color:#3c3c3c;letter-spacing:-0.438px;">Total spend missing documents</div>
<div class="t" style="left:1167.98px;top:703.57px;font-size:20px;line-height:24px;font-weight:700;color:#3c3c3c;letter-spacing:-0.371px;">Total expenses missing</div>
<div class="t" style="left:1167.38px;top:733.07px;font-size:20px;line-height:24px;font-weight:700;color:#3c3c3c;letter-spacing:-0.142px;">documents</div>
<div class="t" style="left:1632.06px;top:705.37px;font-size:20px;line-height:24px;font-weight:700;color:#3c3c3c;letter-spacing:-0.263px;">Documentation compliance rating</div>
<div class="t" style="left:704.81px;top:806.47px;font-size:50.3px;line-height:60px;font-weight:400;color:#212121;letter-spacing:2.345px;-webkit-text-stroke:2.1px #212121;">$9,870.54</div>
<div class="t" style="left:1171.74px;top:806.47px;font-size:50.3px;line-height:60px;font-weight:400;color:transparent;letter-spacing:0.000px;transform:scaleX(0.7194);transform-origin:0 0;">1</div>
<div class="t" style="left:1198.33px;top:806.47px;font-size:50.3px;line-height:60px;font-weight:400;color:#212121;letter-spacing:3.304px;-webkit-text-stroke:2.1px #212121;">,048</div>
<div class="t" style="left:1634.77px;top:806.47px;font-size:50.3px;line-height:60px;font-weight:400;color:#212121;letter-spacing:0.000px;-webkit-text-stroke:2.1px #212121;transform:scaleX(1.0212);transform-origin:0 0;">2</div>
<div class="t" style="left:1667.94px;top:806.47px;font-size:50.3px;line-height:60px;font-weight:400;color:transparent;letter-spacing:0.000px;transform:scaleX(0.7194);transform-origin:0 0;">1</div>
<div class="t" style="left:1698.87px;top:806.47px;font-size:50.3px;line-height:60px;font-weight:400;color:#212121;letter-spacing:0.000px;-webkit-text-stroke:2.1px #212121;transform:scaleX(0.8800);transform-origin:0 0;">%</div>
<div class="t" style="left:996.73px;top:827.60px;font-size:15.3px;line-height:18px;font-weight:400;color:#1c5636;letter-spacing:0.199px;-webkit-text-stroke:0.2px #1c5636;">24%</div>
<div class="t" style="left:1353.93px;top:827.60px;font-size:15.3px;line-height:18px;font-weight:400;color:#1c5636;letter-spacing:0.199px;-webkit-text-stroke:0.2px #1c5636;">24%</div>
<div class="t" style="left:1788.53px;top:827.60px;font-size:15.3px;line-height:18px;font-weight:400;color:#1c5636;letter-spacing:0.199px;-webkit-text-stroke:0.2px #1c5636;">24%</div>
<div class="t" style="left:702.88px;top:941.47px;font-size:20px;line-height:24px;font-weight:700;color:#333;letter-spacing:-0.364px;">Compliance of your reports</div>
<div class="t" style="left:1399.68px;top:941.47px;font-size:20px;line-height:24px;font-weight:700;color:#333;letter-spacing:-0.293px;">Compliance of your entities</div>
<div class="t" style="left:702.25px;top:1010.78px;font-size:17.65px;line-height:21px;font-weight:400;color:#262626;letter-spacing:-0.076px;">Erin C.</div>
<div class="t" style="left:703.67px;top:1059.88px;font-size:17.65px;line-height:21px;font-weight:400;color:#262626;letter-spacing:-0.212px;">Annie L.</div>
<div class="t" style="left:702.80px;top:1109.68px;font-size:17.65px;line-height:21px;font-weight:400;color:#262626;letter-spacing:0.006px;">Craig L.</div>
<div class="t" style="left:702.25px;top:1158.78px;font-size:17.65px;line-height:21px;font-weight:400;color:#262626;letter-spacing:0.241px;">Miracle C.</div>
<div class="t" style="left:702.90px;top:1208.58px;font-size:17.65px;line-height:21px;font-weight:400;color:#262626;letter-spacing:-0.203px;">Sara A.</div>
<div class="t" style="left:1399.14px;top:1010.78px;font-size:17.65px;line-height:21px;font-weight:400;color:#262626;letter-spacing:-0.538px;">USA</div>
<div class="t" style="left:1399.60px;top:1059.88px;font-size:17.65px;line-height:21px;font-weight:400;color:#262626;letter-spacing:-0.180px;">Canada</div>
<div class="t" style="left:1399.05px;top:1109.68px;font-size:17.65px;line-height:21px;font-weight:400;color:#262626;letter-spacing:0.204px;">Brazil</div>
<div class="t" style="left:1399.05px;top:1158.78px;font-size:17.65px;line-height:21px;font-weight:400;color:#262626;letter-spacing:0.423px;">Mexico</div>
<div class="t" style="left:821.36px;top:1259.18px;font-size:14.5px;line-height:17px;font-weight:400;color:#777;letter-spacing:0.000px;">0%</div>
<div class="t" style="left:907.40px;top:1259.18px;font-size:14.5px;line-height:17px;font-weight:400;color:#777;letter-spacing:0.000px;">20%</div>
<div class="t" style="left:1001.50px;top:1259.18px;font-size:14.5px;line-height:17px;font-weight:400;color:#777;letter-spacing:0.000px;">40%</div>
<div class="t" style="left:1095.50px;top:1259.18px;font-size:14.5px;line-height:17px;font-weight:400;color:#777;letter-spacing:0.000px;">60%</div>
<div class="t" style="left:1189.40px;top:1259.18px;font-size:14.5px;line-height:17px;font-weight:400;color:#777;letter-spacing:0.000px;">80%</div>
<div class="t" style="left:1274.13px;top:1259.18px;font-size:14.5px;line-height:17px;font-weight:400;color:#777;letter-spacing:0.000px;">100%</div>
<div class="t" style="left:1515.90px;top:1259.18px;font-size:14.5px;line-height:17px;font-weight:400;color:#777;letter-spacing:0.000px;">$0k</div>
<div class="t" style="left:1609.60px;top:1259.18px;font-size:14.5px;line-height:17px;font-weight:400;color:#777;letter-spacing:0.000px;">$3k</div>
<div class="t" style="left:1703.40px;top:1259.18px;font-size:14.5px;line-height:17px;font-weight:400;color:#777;letter-spacing:0.000px;">$6k</div>
<div class="t" style="left:1797.50px;top:1259.18px;font-size:14.5px;line-height:17px;font-weight:400;color:#777;letter-spacing:0.000px;">$9k</div>
<div class="t" style="left:1883.54px;top:1259.18px;font-size:14.5px;line-height:17px;font-weight:400;color:#777;letter-spacing:0.000px;">$12k</div>
<div class="t" style="left:1977.04px;top:1259.18px;font-size:14.5px;line-height:17px;font-weight:400;color:#777;letter-spacing:0.000px;">$15k</div>
<svg width="2257" height="1282" viewBox="0 0 2257 1282" style="left:0;top:0" fill="none" stroke-linecap="round" stroke-linejoin="round">
<path fill="#222" fill-rule="evenodd" d="M232.1,229.25 L249.2,229.25 C252.6,229.25 253.2,224.95 257.4,224.95 L264.9,224.95 L264.9,246.75 L247.8,246.75 C244.2,246.75 243.6,250.9 239.4,250.9 L232.1,250.9 Z M237.65,234.7 L245.8,234.7 C249.2,234.7 249.6,230.4 253.2,230.4 L259.45,230.4 L259.45,241.05 L251.6,241.05 C248,241.05 247.6,245.85 243.8,245.85 L237.65,245.85 Z"/>
<path d="M334.7,290.2 L340.6,296 L334.7,301.8" stroke="#333" stroke-width="1.7"/>
<path d="M1949,235.6 L1955.7,241.4 L1962.4,235.6 M2026.9,235.6 L2033.6,241.4 L2040.3,235.6" stroke="#222" stroke-width="1.8"/>
<g stroke="#6e6e6e" stroke-width="1.7"><circle cx="253.4" cy="367.8" r="3.5"/><path d="M245.2,377.8 C245.2,375 249,373.8 253.5,373.8 C258,373.8 261.9,375 261.9,377.8 C261.9,379.1 261.2,379.6 260,379.6 L247,379.6 C245.8,379.6 245.2,379.1 245.2,377.8 Z"/></g>
<g stroke="#222"><path d="M246.5,418.4 L260.4,418.4 M244.6,421.9 L262.3,421.9" stroke-width="1.5"/><rect x="243.2" y="424.9" width="20.6" height="14.4" rx="3" stroke-width="2"/><path d="M243.2,435.6 L250.6,435.6 C253,435.6 253.2,432.4 255.6,432.4 L263.8,432.4 L263.8,438.3 L243.2,438.3 Z" fill="#222" stroke-width="1"/></g>
<g><rect x="242.1" y="487" width="22.8" height="9.4" rx="2.5" stroke="#222" stroke-width="2"/><path d="M246.4,479 L260.5,479 C261.4,479 262,479.5 262.4,480.3 L265.9,487.6 L241.1,487.6 L244.5,480.3 C244.9,479.5 245.5,479 246.4,479 Z" fill="#222"/><path d="M250.1,487.4 A3.4,3.4 0 0 0 256.9,487.4 Z" fill="#222"/><circle cx="265.9" cy="475.9" r="4.9" fill="#1f5a3d"/></g>
<g stroke="#222"><path d="M245.1,541.5 L248.6,539.9 Q249.4,539.6 250.3,539.9 L255.4,541.4 L258.6,539.9 C260.5,539.1 262.8,539.8 263.8,541.1 C264.7,542.3 264.5,543.3 263.2,544.1 L252.6,550.4 C250.5,551.6 248,551.6 246.3,550.3 L243.2,547.6 C242.3,546.8 242.7,545.6 244,545.3 L245.5,545.2 L247.7,546.8 L251,544.4 Z" stroke-width="1.75"/><path d="M246.6,555.9 L260.6,555.9" stroke-width="2"/></g>
<g stroke="#7c7c7c" stroke-width="1.5"><path d="M246.9,652.7 L246.9,636.2 C246.9,635.3 247.6,634.6 248.5,634.6 L258,634.6 C258.9,634.6 259.6,635.3 259.6,636.2 L259.6,652.7 M244.3,652.7 L262.7,652.7"/></g>
<rect x="252.65" y="637.6999999999999" width="1.2" height="1.2" fill="#7c7c7c"/>
<rect x="255.9" y="637.6999999999999" width="1.2" height="1.2" fill="#7c7c7c"/>
<rect x="249.4" y="641.0" width="1.2" height="1.2" fill="#7c7c7c"/>
<rect x="252.65" y="641.0" width="1.2" height="1.2" fill="#7c7c7c"/>
<rect x="255.9" y="641.0" width="1.2" height="1.2" fill="#7c7c7c"/>
<rect x="249.4" y="644.3" width="1.2" height="1.2" fill="#7c7c7c"/>
<rect x="252.65" y="644.3" width="1.2" height="1.2" fill="#7c7c7c"/>
<rect x="255.9" y="644.3" width="1.2" height="1.2" fill="#7c7c7c"/>
<rect x="252" y="649" width="2.6" height="3.7" fill="#7c7c7c"/>
<g stroke="#222" stroke-width="1.8"><path d="M242.9,696.4 L242.9,694.2 C242.9,693.4 243.3,692.9 244,692.6 L253.4,689.7 L263,692.6 C263.7,692.9 264.1,693.4 264.1,694.2 L264.1,696.4 Z"/><path d="M246.3,696.4 L246.3,705.3 M253.4,696.4 L253.4,705.3 M260.6,696.4 L260.6,705.3"/><rect x="242.9" y="705.3" width="21.2" height="5" rx="1.8"/><path d="M258,691.2 L263,692.8 L264.1,694.2 L264.1,696.4 L258,696.4 Z M258,705.3 L264.1,705.3 L264.1,708.5 L262.5,710.3 L258,710.3 Z" fill="#222" stroke-width="1"/></g>
<g><circle cx="253.4" cy="760.1" r="11.3" stroke="#222" stroke-width="2"/><path d="M252.7,759.4 L264.7,759.4 A11.3,11.3 0 0 1 252.7,771.4 Z" fill="#222"/></g>
<g stroke="#222"><path d="M245.2,830.8 L245.2,809.6 C245.2,808.7 245.9,808 246.8,808 L260.2,808 C261.1,808 261.8,808.7 261.8,809.6 L261.8,830.8 l-2.1,-1.5 l-2.05,1.5 l-2.05,-1.5 l-2.1,1.5 l-2.1,-1.5 l-2.05,1.5 l-2.05,-1.5 Z" stroke-width="1.8"/><path d="M252,812.4 L255.2,812.4 M249.4,816.4 L257.6,816.4 M249.4,820.4 L257.6,820.4 M253.6,824.5 L257.6,824.5" stroke-width="1.6"/></g>
<path d="M244.1,868.5 L244.1,887.8 L263.5,887.8 M244.6,883 L251,875.6 L254.3,879.5 L262.8,871.6" stroke="#222" stroke-width="1.8" stroke-linejoin="miter" stroke-linecap="butt"/>
<g stroke="#222" stroke-width="1.8"><circle cx="249.2" cy="934" r="3.7"/><path d="M241.9,944.9 C241.9,942 245,940.9 249.2,940.9 C253.4,940.9 256.5,942 256.5,944.9 C256.5,946.2 256,946.6 255,946.6 L243.4,946.6 C242.4,946.6 241.9,946.2 241.9,944.9 Z"/></g>
<path d="M255.4,929.6 A4.5,4.5 0 1 1 255.4,938.4 A5.9,5.9 0 0 0 255.4,929.6 Z M258.3,940.4 C263,940.4 266.2,942 266.2,945 C266.2,946.6 265.4,947.5 264,947.5 L259.2,947.5 L259.2,945 C259.2,943 258.2,941.5 256.8,940.5 Z" fill="#222"/>
<path d="M253.5,990.2 C252.5,988.7 251,988 249.4,988 L244.8,988 C243.9,988 243.2,988.7 243.2,989.6 L243.2,1002 C243.2,1002.9 243.9,1003.6 244.8,1003.6 L250,1003.6 C251.6,1003.6 252.8,1004.6 253.5,1006.6 C254.2,1004.6 255.4,1003.6 257,1003.6 L262.2,1003.6 C263.1,1003.6 263.8,1002.9 263.8,1002 L263.8,989.6 C263.8,988.7 263.1,988 262.2,988 L257.6,988 C256,988 254.5,988.7 253.5,990.2 L253.5,1006" stroke="#222" stroke-width="1.8"/>
<g stroke="#222" stroke-width="1.8"><path d="M249.6,1045.4 L253.5,1049.2 L257.4,1045.4" stroke-width="1.7"/><rect x="242" y="1049.8" width="23" height="7.4" rx="2"/><rect x="242" y="1055" width="23" height="3.2" fill="#222" stroke="none"/><path d="M243.4,1057.5 L243.4,1063 C243.4,1064.2 244.3,1065 245.4,1065 L261.6,1065 C262.7,1065 263.6,1064.2 263.6,1063 L263.6,1057.5 M253.5,1057.5 L253.5,1065"/></g>
<g><rect x="339.95" y="448.05" width="24.95" height="16.85" rx="3.2" fill="#444"/><path d="M344.8,449.75 L360,449.75 A3.1,3.1 0 0 0 363.1,452.85 L363.1,460.1 A3.1,3.1 0 0 0 360,463.2 L344.8,463.2 A3.1,3.1 0 0 0 341.7,460.1 L341.7,452.85 A3.1,3.1 0 0 0 344.8,449.75 Z" fill="#fff"/><clipPath id="spc"><rect x="341.7" y="449.75" width="21.4" height="13.45"/></clipPath><ellipse cx="352.3" cy="456.5" rx="4.35" ry="7.4" stroke="#444" stroke-width="1.7" clip-path="url(#spc)"/></g>
<path d="M352.40,505.20 L361.70,508.78 L361.70,515.50 C361.70,521.78 357.61,525.81 352.40,527.60 C347.19,525.81 343.10,521.78 343.10,515.50 L343.10,508.78 Z M348.49,516.40 L351.28,519.09 L356.86,513.26" stroke="#444" stroke-width="1.9"/>
<g stroke="#444"><path d="M341.9,569.9 C341.7,568.5 343.3,568.1 344.3,569 L346.5,571.7 L350,571.5 L347.8,566.1 L350.2,566.1 C351.3,566.1 352.1,566.5 352.7,567.4 L354.6,570 C355.3,570.9 356.1,571.3 357.2,571.4 L359.4,571.7 C361.2,572.1 362.6,573.8 362.9,575.6 C363,576.5 362.5,577 361.6,577 L347.2,577 C344.7,577 342.7,575.2 342.2,572.8 Z" stroke-width="1.75"/><path d="M345.6,584 L359.1,584" stroke-width="2"/></g>
<g stroke="#444" stroke-width="1.4"><rect x="688.9" y="442.4" width="13.4" height="9.9" rx="1.8"/><path d="M692.6,440.8 L692.6,444 M698.6,440.8 L698.6,444"/></g>
<rect x="694.1" y="446.29999999999995" width="1.2" height="1.2" fill="#444"/>
<rect x="696.5" y="446.29999999999995" width="1.2" height="1.2" fill="#444"/>
<rect x="698.9" y="446.29999999999995" width="1.2" height="1.2" fill="#444"/>
<rect x="691.3" y="448.9" width="1.2" height="1.2" fill="#444"/>
<rect x="694.1" y="448.9" width="1.2" height="1.2" fill="#444"/>
<rect x="696.5" y="448.9" width="1.2" height="1.2" fill="#444"/>
<path d="M1082.55,440.60 L1088.50,442.84 L1088.50,447.04 C1088.50,450.96 1085.88,453.48 1082.55,454.60 C1079.22,453.48 1076.60,450.96 1076.60,447.04 L1076.60,442.84 Z M1080.05,447.60 L1081.84,449.28 L1085.41,445.64" stroke="#444" stroke-width="1.3"/>
<path d="M1279.25,440.60 L1285.20,442.84 L1285.20,447.04 C1285.20,450.96 1282.58,453.48 1279.25,454.60 C1275.92,453.48 1273.30,450.96 1273.30,447.04 L1273.30,442.84 Z M1276.75,447.60 L1278.54,449.28 L1282.11,445.64" stroke="#444" stroke-width="1.3"/>
<path d="M1480.75,440.60 L1486.70,442.84 L1486.70,447.04 C1486.70,450.96 1484.08,453.48 1480.75,454.60 C1477.42,453.48 1474.80,450.96 1474.80,447.04 L1474.80,442.84 Z M1478.25,447.60 L1480.04,449.28 L1483.61,445.64" stroke="#444" stroke-width="1.3"/>
<circle cx="1046.8" cy="447.4" r="7.5" fill="#222"/><path d="M1044.1,444.7 L1049.5,450.09999999999997 M1049.5,444.7 L1044.1,450.09999999999997" stroke="#fff" stroke-width="1.45"/>
<circle cx="1244.2" cy="447.4" r="7.5" fill="#222"/><path d="M1241.5,444.7 L1246.9,450.09999999999997 M1246.9,444.7 L1241.5,450.09999999999997" stroke="#fff" stroke-width="1.45"/>
<circle cx="1446.4" cy="447.4" r="7.5" fill="#222"/><path d="M1443.7,444.7 L1449.1000000000001,450.09999999999997 M1449.1000000000001,444.7 L1443.7,450.09999999999997" stroke="#fff" stroke-width="1.45"/>
<circle cx="1629.9" cy="447.4" r="7.5" fill="#222"/><path d="M1627.2,444.7 L1632.6000000000001,450.09999999999997 M1632.6000000000001,444.7 L1627.2,450.09999999999997" stroke="#fff" stroke-width="1.45"/>
<g stroke="#222"><circle cx="1664.5" cy="369.8" r="7.4" stroke-width="1.5"/><path d="M1660.4,369.8 L1668.6,369.8 M1664.5,365.7 L1664.5,373.9" stroke-width="1.5"/><circle cx="1668.2" cy="447.4" r="6.1" stroke-width="1.3"/><path d="M1665,447.4 L1671.4,447.4 M1668.2,444.2 L1668.2,450.6" stroke-width="1.3"/></g>
<path d="M1813,362.8 L1813,375.8 L1826.4,375.8 M1813.6,372.4 L1817.8,367.3 L1820.3,370 L1825.9,364.6" stroke="#b8b8b8" stroke-width="1.3" stroke-linejoin="miter" stroke-linecap="butt"/>
<path d="M1956.8,367.4 L1956.8,373.2 C1956.8,374.3 1957.6,374.9 1958.6,374.9 L1970.5,374.9 C1971.5,374.9 1972.3,374.3 1972.3,373.2 L1972.3,367.4 M1964.7,362.5 L1964.7,368.6 C1964.7,371 1963.3,372.3 1960.6,372.3 M1961.3,365.6 L1964.7,362.3 L1968.1,365.6" stroke="#222" stroke-width="1.5"/>
<path d="M1926.2,441.9 L1937.2,452.9 M1937.2,441.9 L1926.2,452.9" stroke="#c22a3d" stroke-width="1.5"/>
<path d="M2001,580.9 L2015.8,595.7 M2015.8,580.9 L2001,595.7" stroke="#555" stroke-width="1.8"/>
<g stroke="#333"><circle cx="1958.7" cy="718.3" r="6.7" stroke-width="1.4"/><path d="M1957.6,717.3 L1958.8,717.3 L1958.8,721.3 M1957,721.4 L1960.6,721.4" stroke-width="1.3" stroke-linecap="butt"/><circle cx="1958.6" cy="715.2" r="0.9" fill="#333" stroke="none"/></g>
<path d="M984.45,829.9 L984.45,841.5 M979.10,836.4 L984.45,841.8 L989.80,836.4" stroke="#222" stroke-width="1.5"/>
<path d="M1341.65,829.9 L1341.65,841.5 M1336.30,836.4 L1341.65,841.8 L1347.00,836.4" stroke="#222" stroke-width="1.5"/>
<path d="M1776.45,829.9 L1776.45,841.5 M1771.10,836.4 L1776.45,841.8 L1781.80,836.4" stroke="#222" stroke-width="1.5"/>
<g id="ones" stroke="none"><path d="M1190.1,817.9 L1184.20,817.9 L1174.50,823.90 L1174.50,829.70 L1183.25,824.60 L1183.25,853.9 L1190.1,853.9 Z" fill="#212121"/><path d="M1686.3,817.9 L1680.40,817.9 L1670.70,823.90 L1670.70,829.70 L1679.45,824.60 L1679.45,853.9 L1686.3,853.9 Z" fill="#212121"/></g>
<g id="dots"><rect x="1069.95" y="711.60" width="3.1" height="3.1" rx="0.5" fill="#1c1c1c"/><rect x="1069.95" y="716.80" width="3.1" height="3.1" rx="0.5" fill="#1c1c1c"/><rect x="1069.95" y="722.00" width="3.1" height="3.1" rx="0.5" fill="#1c1c1c"/><rect x="1534.45" y="724.40" width="3.1" height="3.1" rx="0.5" fill="#1c1c1c"/><rect x="1534.45" y="729.60" width="3.1" height="3.1" rx="0.5" fill="#1c1c1c"/><rect x="1534.45" y="734.80" width="3.1" height="3.1" rx="0.5" fill="#1c1c1c"/><rect x="1999.15" y="711.60" width="3.1" height="3.1" rx="0.5" fill="#1c1c1c"/><rect x="1999.15" y="716.80" width="3.1" height="3.1" rx="0.5" fill="#1c1c1c"/><rect x="1999.15" y="722.00" width="3.1" height="3.1" rx="0.5" fill="#1c1c1c"/><rect x="1302.05" y="947.60" width="3.1" height="3.1" rx="0.5" fill="#1c1c1c"/><rect x="1302.05" y="952.80" width="3.1" height="3.1" rx="0.5" fill="#1c1c1c"/><rect x="1302.05" y="958.00" width="3.1" height="3.1" rx="0.5" fill="#1c1c1c"/><rect x="1999.05" y="947.60" width="3.1" height="3.1" rx="0.5" fill="#1c1c1c"/><rect x="1999.05" y="952.80" width="3.1" height="3.1" rx="0.5" fill="#1c1c1c"/><rect x="1999.05" y="958.00" width="3.1" height="3.1" rx="0.5" fill="#1c1c1c"/></g>
</svg>
</div></div>
<svg id="edge" width="2257" height="1282" viewBox="0 0 2257 1282"><polygon points="198,202 201.4,202 199.4,1282 198,1282" fill="#000"/></svg>
</body></html>
